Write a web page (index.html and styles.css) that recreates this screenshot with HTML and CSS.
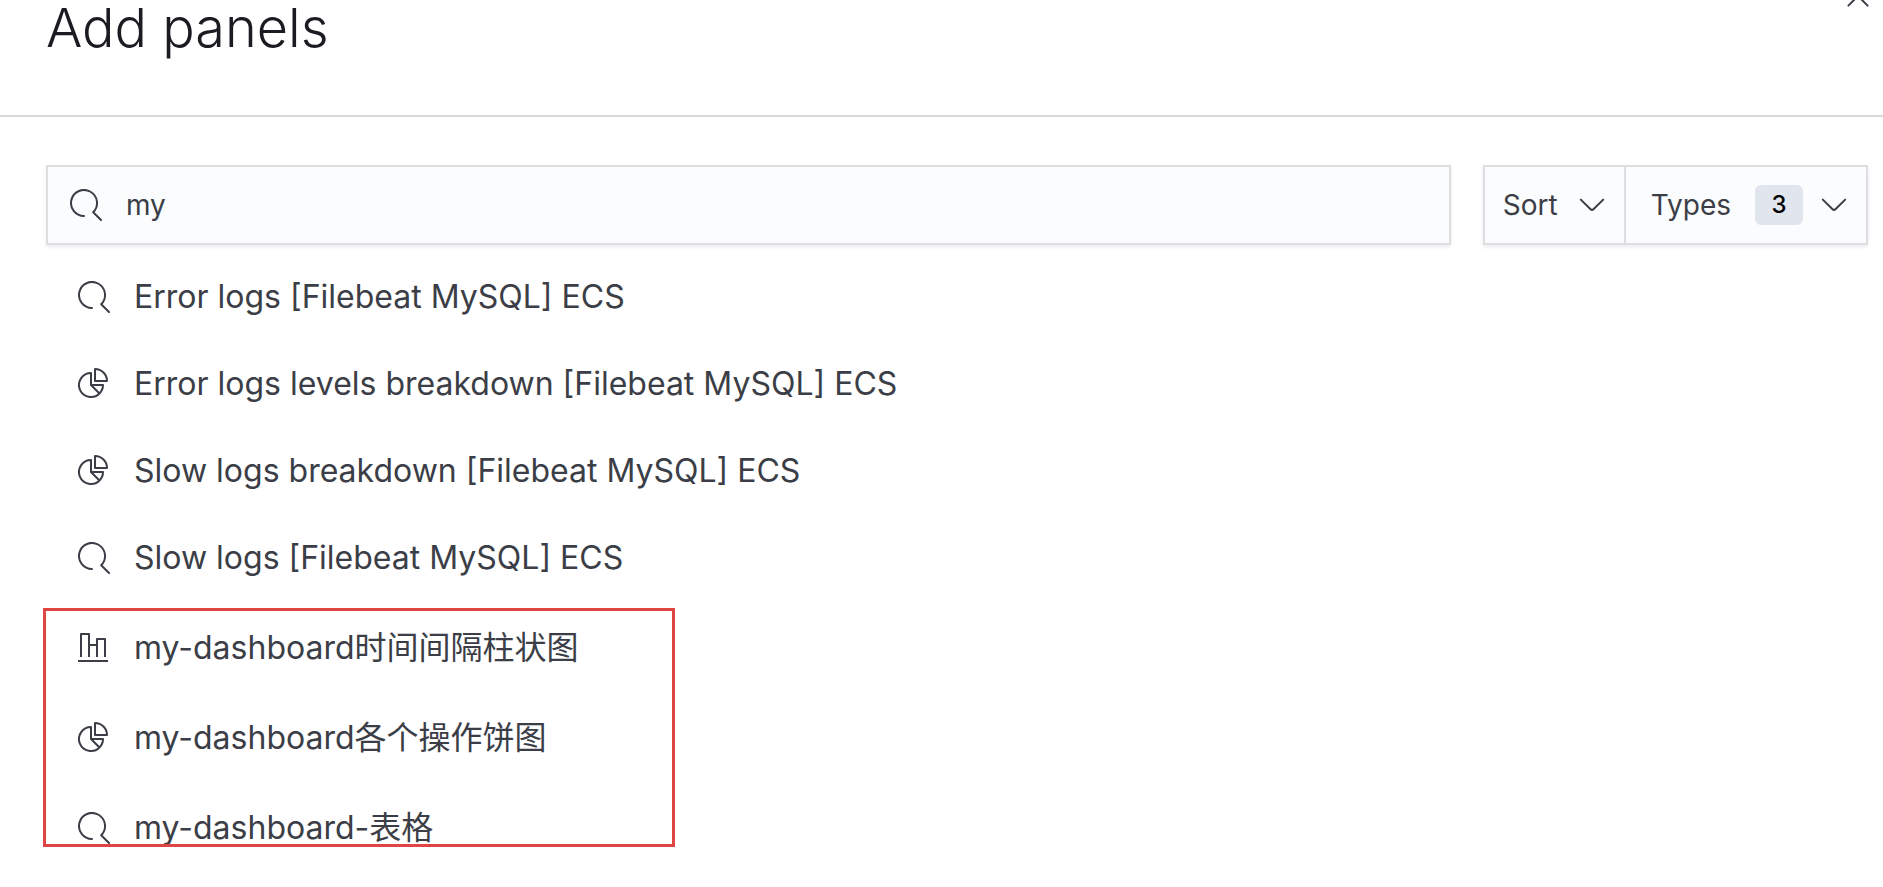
FILE: index.html
```html
<!DOCTYPE html>
<html lang="en">
<head>
<meta charset="utf-8">
<title>Add panels</title>
<link rel="stylesheet" href="styles.css">
</head>
<body>
<svg class="sprite" aria-hidden="true">
  <symbol id="search" viewBox="0 0 16 16"><path d="M7 13.5A6.5 6.5 0 1 1 11.6 11.6L15.5 15.5" fill="none" stroke="currentColor" stroke-linecap="round" stroke-linejoin="round"/></symbol>
  <symbol id="pie" viewBox="0 0 16 16"><path d="M6.5 2.5A6 6 0 1 0 10.74 12.74L6.5 8.5zM6.5 8.5H12.5A6 6 0 0 1 10.74 12.74M8.5 .5V6.5H14.5A6 6 0 0 0 8.5 .5z" fill="none" stroke="currentColor" stroke-linejoin="round"/></symbol>
  <symbol id="bars" viewBox="0 0 16 16"><path d="M1.5 12.5V1H5.5V12.5M5.5 6.5H9.5M9.5 12.5V3.5H13.5V12.5M0 14.5H15" fill="none" stroke="currentColor" stroke-linejoin="round"/></symbol>
  <symbol id="chevron" viewBox="0 0 16 16"><path d="M2.4 5.3L7.3 10.1Q8 10.8 8.7 10.1L13.6 5.3" fill="none" stroke="currentColor" stroke-linecap="round"/></symbol>
  <symbol id="cross" viewBox="0 0 16 16"><path d="M3.2 3.2L12.8 12.8M12.8 3.2L3.2 12.8" fill="none" stroke="currentColor" stroke-linecap="round"/></symbol>
</svg>
<section class="flyout">
  <header class="header">
    <h1 class="title">Add panels</h1>
    <button class="close" type="button" aria-label="Close"><svg class="icon"><use href="#cross"/></svg></button>
  </header>
  <main class="content">
    <div class="toolbar">
      <label class="search">
        <svg class="icon"><use href="#search"/></svg>
        <input class="search-input" type="text" value="my" aria-label="Search">
      </label>
      <div class="filters">
        <button class="filter filter-sort" type="button">Sort<svg class="chevron"><use href="#chevron"/></svg></button>
        <button class="filter filter-types" type="button">Types<span class="badge">3</span><svg class="chevron"><use href="#chevron"/></svg></button>
      </div>
    </div>
    <ul class="list">
      <li><button class="item" type="button"><svg class="icon"><use href="#search"/></svg>Error logs [Filebeat MySQL] ECS</button></li>
      <li><button class="item" type="button"><svg class="icon"><use href="#pie"/></svg>Error logs levels breakdown [Filebeat MySQL] ECS</button></li>
      <li><button class="item" type="button"><svg class="icon"><use href="#pie"/></svg>Slow logs breakdown [Filebeat MySQL] ECS</button></li>
      <li><button class="item" type="button"><svg class="icon"><use href="#search"/></svg>Slow logs [Filebeat MySQL] ECS</button></li>
    </ul>
    <ul class="list list-marked">
      <li><button class="item" type="button"><svg class="icon"><use href="#bars"/></svg>my-dashboard时间间隔柱状图</button></li>
      <li><button class="item" type="button"><svg class="icon"><use href="#pie"/></svg>my-dashboard各个操作饼图</button></li>
      <li><button class="item" type="button"><svg class="icon"><use href="#search"/></svg>my-dashboard-表格</button></li>
    </ul>
  </main>
</section>
</body>
</html>
```
FILE: styles.css
```css
*, *::before, *::after { box-sizing: border-box; }

body {
  margin: 0;
  background: #fff;
  color: #3b3e46;
  font-family: Inter, "Noto Sans CJK SC", sans-serif;
  overflow: hidden;
}

button, input {
  font: inherit;
  color: inherit;
  background: none;
  border: 0;
  margin: 0;
  padding: 0;
}

.sprite { position: absolute; width: 0; height: 0; }

.icon {
  flex: none;
  display: block;
  width: 32px;
  height: 32px;
}

.header {
  position: relative;
  padding: 0 46px 60px;
  border-bottom: 2px solid #d8d9db;
}

.title {
  margin: 0;
  color: #1a1c21;
  font-size: 54px;
  font-weight: 300;
  line-height: 55px;
}

.close {
  position: absolute;
  top: -20px;
  right: 9px;
}

.content { padding: 48px 15px 0 46px; }

.toolbar {
  display: flex;
  gap: 32px;
  font-size: 28px;
}

.search, .filters {
  display: flex;
  height: 80px;
  background: #fbfcfd;
  border: 2px solid #dddee1;
  box-shadow: 0 2px 4px rgba(0, 0, 0, 0.08);
}

.search {
  flex: 1;
  align-items: center;
  gap: 24px;
  padding: 0 22px;
}

.search-input { flex: 1; min-width: 0; outline: 0; }

.filters { flex: none; }

.filter {
  display: flex;
  align-items: center;
}

.filter-sort {
  gap: 18px;
  padding: 0 16px 0 18px;
  border-right: 2px solid #dddee1;
}

.filter-types { padding: 0 16px 0 25px; }

.chevron { flex: none; width: 32px; height: 32px; }

.badge {
  width: 48px;
  margin: 0 15px 0 24px;
  border-radius: 6px;
  background: #e0e5ee;
  color: #000;
  font-size: 24px;
  font-weight: 500;
  line-height: 40px;
  text-align: center;
}

.list {
  margin: 0;
  padding: 8px 32px 0;
  list-style: none;
}

.item {
  display: flex;
  align-items: center;
  gap: 24px;
  height: 87px;
  font-size: 32px;
  line-height: 48px;
  white-space: nowrap;
}

.list-marked { position: relative; padding-top: 2px; }
.list-marked .item { height: 90px; }

.list-marked::after {
  content: "";
  position: absolute;
  top: 7px;
  left: -3px;
  width: 632px;
  bottom: 26px;
  border: 3px solid #e04444;
  pointer-events: none;
}
```
